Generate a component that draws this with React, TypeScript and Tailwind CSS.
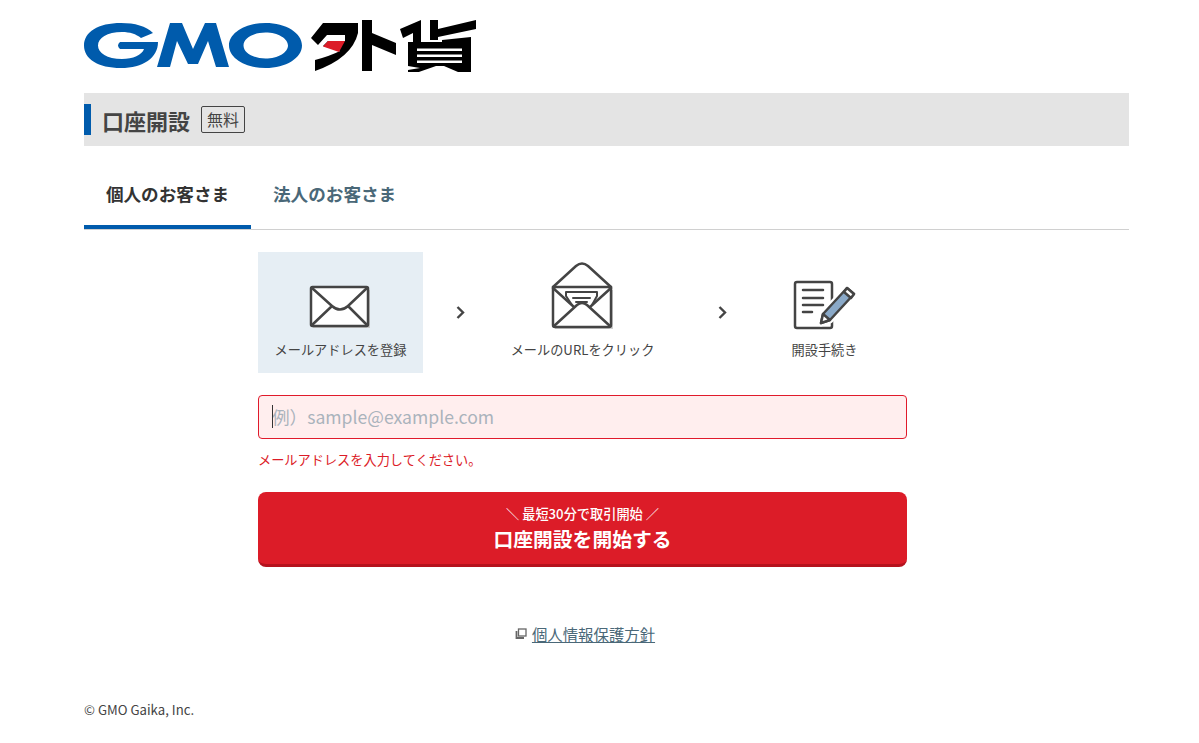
const font = { fontFamily: '"Noto Sans CJK JP", "Noto Sans", sans-serif' }

const Logo = () => (
  <svg width="392" height="54" viewBox="84 18 392 54" role="img" aria-label="GMO外貨" className="block">
    {/* GMO */}
    <path
      fill="#005bac"
      d="M153 33C146 26 135 23 121 23C98 23 84 32 84 45.5C84 59 98 68 121 68C143 68 158 58 158 42L120 42Q116 45.5 120 49L144 49C142 55 133 59 122 59C107 59 98 53 98 45.5C98 38 107 32 122 32C130 32 136 34 141 38Z"
    />
    <path
      fill="#005bac"
      d="M157 67L170 23L182 23L193 49L205 23L216 23L229 67L216 67L208 41L198 64L188 64L177 41L170 67Z"
    />
    <path
      fill="#005bac"
      fillRule="evenodd"
      d="M229 45.5C229 33 245 23 265.5 23C286 23 302 33 302 45.5C302 58 286 68 265.5 68C245 68 229 58 229 45.5ZM243.5 45.5C243.5 52.5 253 58.5 265.5 58.5C278 58.5 288 52.5 288 45.5C288 38.5 278 32.5 265.5 32.5C253 32.5 243.5 38.5 243.5 45.5Z"
    />
    {/* gaika mark */}
    <path fill="#000" d="M323 23L358 23L358 33Q352 58 315 71L315 60Q330 56 340 51L323 46L328 41L345 41L345 35L327 35L318 45L311 38Z" />
    <path fill="#dc1c28" d="M328 41L345 41L339 52L323 46.5Z" />
    <path fill="#000" d="M362 20L372 20L372 33L396 43L396 55L372 45L372 71L362 71Z" />
    <path fill="#000" d="M400 29L421 20L421 29L421 42L413 42L413 33L403 38Z" />
    <path fill="#000" d="M430 20L438 20L438 29L476 20L476 29L438 37L438 40L430 40Z" />
    <path fill="#000" d="M442 40L471 37L471 42L442 42Z" />
    <path fill="#000" d="M408 42H471V66H408Z" />
    <path fill="#000" d="M408 66H436L416 73H408L408 70L420 68Z" />
    <path fill="#000" d="M444 66H471V72H458Z" />
    <path fill="#fff" d="M417 48.5H462V51H417ZM417 54.5H462V57H417ZM417 60.5H462V63H417Z" />
  </svg>
)

const MailIcon = () => (
  <svg width="68" height="48" viewBox="307 283 68 48" fill="none" stroke="#444" strokeWidth="2.5" strokeLinejoin="round" strokeLinecap="round">
    <rect x="313" y="290" width="57" height="38" fill="#c9c9c9" stroke="none" />
    <rect x="311" y="287" width="57" height="39" rx="1.5" fill="#fff" />
    <path d="M312 288L332 306Q340 313 348 306L367 288M312 325L332 306M367 325L348 306" />
  </svg>
)

const OpenMailIcon = () => (
  <svg width="66" height="70" viewBox="550 261 66 70" fill="none" stroke="#444" strokeWidth="2.5" strokeLinejoin="round" strokeLinecap="round">
    <rect x="555" y="290" width="58" height="39" fill="#d0d0d0" stroke="none" />
    <path fill="#fff" d="M553 287L576 266Q582 261 588 266L611 287V325Q611 327 609 327H555Q553 327 553 325Z" />
    <path d="M553 287H611M553 288L574 307M611 288L590 307" />
    <path strokeWidth="2" d="M572 305L566 296V292H597V296L592 305" />
    <path strokeWidth="2" d="M573 298H590M576 302H587" />
    <path d="M554 326L577 305Q582 301 587 305L610 326" />
  </svg>
)

const FormIcon = () => (
  <svg width="66" height="52" viewBox="792 278 66 52" fill="none" stroke="#444" strokeWidth="2.5" strokeLinejoin="round" strokeLinecap="round">
    <rect x="795" y="281" width="37" height="46" rx="2" fill="#fff" />
    <path d="M803 289H823M803 297H823M803 304H823M803 311H812" />
    <path stroke="#fff" strokeWidth="7" d="M821 322L823 313L847 287L854 293L830 319Z" />
    <path fill="#8aa9c8" d="M821 322L823 313L847 287L854 293L830 319Z" />
    <path fill="#fff" d="M821 322L823 313L830 319Z" />
    <path fill="#fff" d="M847 287L854 293L851 297L844 291Z" />
  </svg>
)

const Chevron = ({ className }: { className: string }) => (
  <svg width="9" height="15" viewBox="0 0 9 15" fill="none" stroke="#444" strokeWidth="2.4" className={`mt-[53px] shrink-0 ${className}`}>
    <path d="M1.5 2L7 7.5L1.5 13" />
  </svg>
)

const CopyIcon = () => (
  <svg width="12" height="12" viewBox="0 0 12 12" fill="none" stroke="#666" strokeWidth="1.3">
    <rect x="3.5" y="1" width="7.5" height="7" fill="#fff" />
    <path d="M1.5 3V10H9" strokeWidth="1.8" />
  </svg>
)

const Step = ({ icon, label, active }: { icon: React.ReactNode; label: string; active?: boolean }) => (
  <div className={`w-[165px] h-[121px] shrink-0 flex flex-col items-center justify-end pb-[14px] ${active ? 'bg-[#e6eef4]' : ''}`}>
    <div className="h-[80px] flex items-end justify-center">{icon}</div>
    <p className="mt-[9px] text-[13.2px] leading-[19px] text-[#444] whitespace-nowrap">{label}</p>
  </div>
)

export default function App() {
  return (
    <div className="min-h-[743px] bg-white pl-[84px] pr-[70px] pt-[18px] text-[#333]" style={font}>
      <Logo />

      <div className="mt-[21px] h-[53px] bg-[#e4e4e4] flex items-center">
        <span className="w-[7px] h-[31px] bg-[#005bac]" />
        <h1 className="ml-[11px] text-[22px] font-bold leading-none text-[#444]">口座開設</h1>
        <span className="ml-[11px] w-[44px] h-[27px] pb-[1px] border border-[#444] rounded-[2px] flex items-center justify-center text-[16px] text-[#444]">
          無料
        </span>
      </div>

      <div className="mt-[16px] flex border-b border-[#d0d0d0]">
        <div className="w-[167px] h-[67px] pt-[1px] mb-[-1px] border-b-4 border-[#005bac] flex items-center justify-center text-[17.6px] font-bold text-[#333]">
          個人のお客さま
        </div>
        <div className="ml-[22px] h-[67px] pt-[1px] border-b-4 border-transparent flex items-center text-[17.6px] font-bold text-[#4a6878]">
          法人のお客さま
        </div>
      </div>

      <main className="ml-[174px] w-[649px]">
        <div className="mt-[22px] flex">
          <Step active icon={<MailIcon />} label="メールアドレスを登録" />
          <Chevron className="ml-[33px] mr-[35px]" />
          <Step icon={<OpenMailIcon />} label="メールのURLをクリック" />
          <Chevron className="ml-[53px] mr-[15px]" />
          <Step icon={<FormIcon />} label="開設手続き" />
        </div>

        <div className="relative mt-[22px]">
          <input
            placeholder="例）sample@example.com"
            className="w-full h-[44px] rounded-[4px] border border-[#e01a2b] bg-[#ffeeee] px-[13px] pb-[2px] text-[17.6px] outline-none placeholder:text-[#aab3bc]"
          />
          <span className="absolute left-[14px] top-[10px] h-[23px] w-px bg-[#333]" />
        </div>
        <p className="mt-[11px] text-[13.2px] leading-[19px] text-[#dc1c28]">メールアドレスを入力してください。</p>

        <button className="mt-[23px] w-full h-[75px] pt-[1px] rounded-[8px] bg-[#dc1c28] border-b-[3px] border-[#b5121d] text-white flex flex-col items-center justify-center">
          <span className="text-[13.2px] font-medium leading-[18px]">＼ 最短30分で取引開始 ／</span>
          <span className="mt-[2px] text-[19.8px] font-bold leading-[28px]">口座開設を開始する</span>
        </button>

        <div className="mt-[56px] pl-[5px] flex items-center justify-center gap-[5px]">
          <CopyIcon />
          <a href="#" className="text-[15.4px] leading-[22px] text-[#4a6878] underline">個人情報保護方針</a>
        </div>
      </main>

      <footer className="mt-[55px] text-[13.2px] leading-[20px] text-[#444]">© GMO Gaika, Inc.</footer>
    </div>
  )
}
